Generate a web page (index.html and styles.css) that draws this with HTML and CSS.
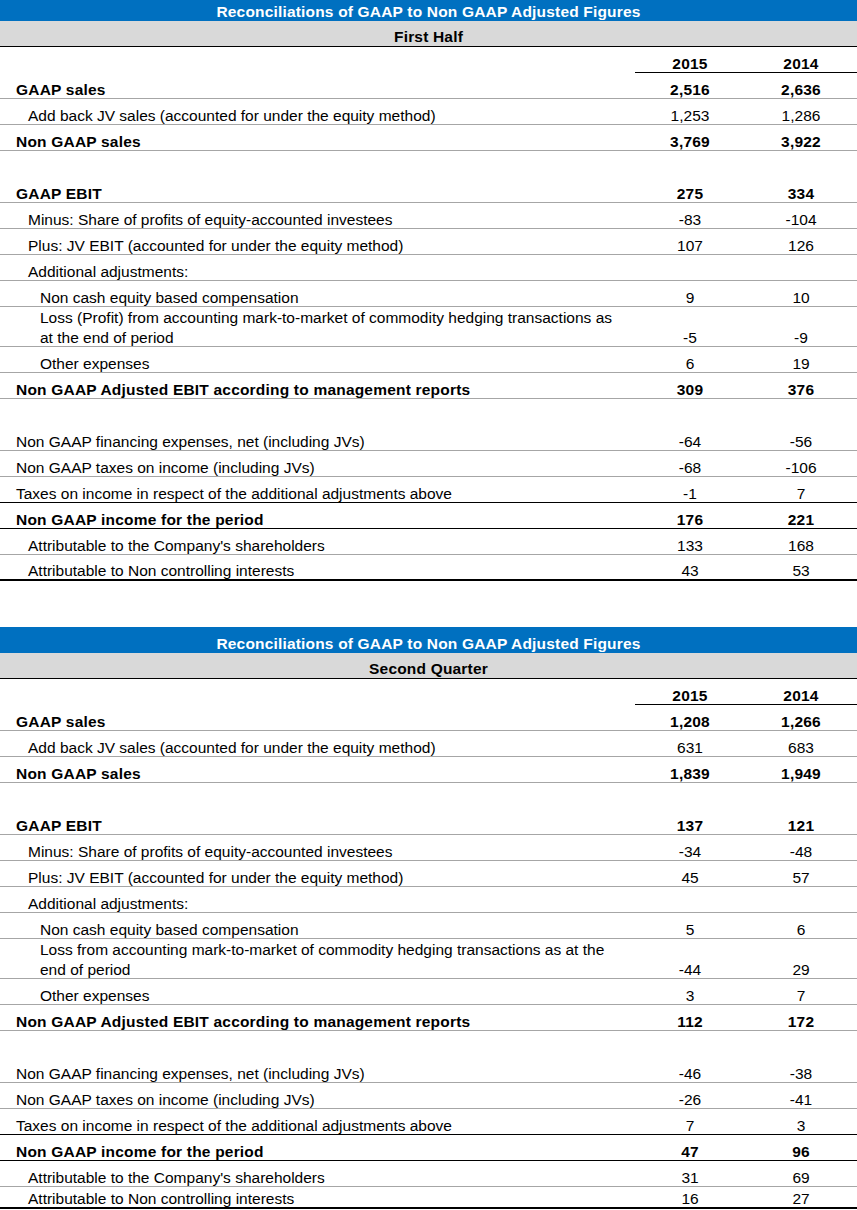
FILE: index.html
```html
<!DOCTYPE html>
<html lang="en">

<head>
    <meta charset="UTF-8">
    <meta name="viewport" content="width=device-width, initial-scale=1.0">
    <title>Reconciliations of GAAP to Non GAAP Adjusted Figures</title>
    <link rel="stylesheet" href="styles.css">
</head>

<body>
    <div class="report">
        <!-- first half -->
        <section class="recon">
            <div class="recon-title recon-title--cut">Reconciliations of GAAP to Non GAAP Adjusted Figures</div>
            <div class="recon-period">First Half</div>
            <div class="row row--plain row--bold">
                <span class="cell label"></span><span class="cell num year">2015</span><span class="cell num year">2014</span>
            </div>
            <div class="row row--bold">
                <span class="cell label">GAAP sales</span><span class="cell num">2,516</span><span class="cell num">2,636</span>
            </div>
            <div class="row">
                <span class="cell label indent-1">Add back JV sales (accounted for under the equity method)</span><span class="cell num">1,253</span><span class="cell num">1,286</span>
            </div>
            <div class="row row--bold">
                <span class="cell label">Non GAAP sales</span><span class="cell num">3,769</span><span class="cell num">3,922</span>
            </div>
            <div class="row row--plain"></div>
            <div class="row row--bold">
                <span class="cell label">GAAP EBIT</span><span class="cell num">275</span><span class="cell num">334</span>
            </div>
            <div class="row">
                <span class="cell label indent-1">Minus: Share of profits of equity-accounted investees</span><span class="cell num">-83</span><span class="cell num">-104</span>
            </div>
            <div class="row">
                <span class="cell label indent-1">Plus: JV EBIT (accounted for under the equity method)</span><span class="cell num">107</span><span class="cell num">126</span>
            </div>
            <div class="row">
                <span class="cell label indent-1">Additional adjustments:</span><span class="cell num"></span><span class="cell num"></span>
            </div>
            <div class="row">
                <span class="cell label indent-2">Non cash equity based compensation</span><span class="cell num">9</span><span class="cell num">10</span>
            </div>
            <div class="row row--tall">
                <span class="cell label indent-2">Loss (Profit) from accounting mark-to-market of commodity hedging transactions as<br>at the end of period</span><span class="cell num">-5</span><span class="cell num">-9</span>
            </div>
            <div class="row">
                <span class="cell label indent-2">Other expenses</span><span class="cell num">6</span><span class="cell num">19</span>
            </div>
            <div class="row row--bold">
                <span class="cell label">Non GAAP Adjusted EBIT according to management reports</span><span class="cell num">309</span><span class="cell num">376</span>
            </div>
            <div class="row row--plain"></div>
            <div class="row">
                <span class="cell label">Non GAAP financing expenses, net (including JVs)</span><span class="cell num">-64</span><span class="cell num">-56</span>
            </div>
            <div class="row">
                <span class="cell label">Non GAAP taxes on income (including JVs)</span><span class="cell num">-68</span><span class="cell num">-106</span>
            </div>
            <div class="row row--dark">
                <span class="cell label">Taxes on income in respect of the additional adjustments above</span><span class="cell num">-1</span><span class="cell num">7</span>
            </div>
            <div class="row row--dark row--bold">
                <span class="cell label">Non GAAP income for the period</span><span class="cell num">176</span><span class="cell num">221</span>
            </div>
            <div class="row">
                <span class="cell label indent-1">Attributable to the Company's shareholders</span><span class="cell num">133</span><span class="cell num">168</span>
            </div>
            <div class="row row--end">
                <span class="cell label indent-1">Attributable to Non controlling interests</span><span class="cell num">43</span><span class="cell num">53</span>
            </div>
        </section>

        <!-- second quarter -->
        <section class="recon">
            <div class="recon-title">Reconciliations of GAAP to Non GAAP Adjusted Figures</div>
            <div class="recon-period">Second Quarter</div>
            <div class="row row--plain row--bold">
                <span class="cell label"></span><span class="cell num year">2015</span><span class="cell num year">2014</span>
            </div>
            <div class="row row--bold">
                <span class="cell label">GAAP sales</span><span class="cell num">1,208</span><span class="cell num">1,266</span>
            </div>
            <div class="row">
                <span class="cell label indent-1">Add back JV sales (accounted for under the equity method)</span><span class="cell num">631</span><span class="cell num">683</span>
            </div>
            <div class="row row--bold">
                <span class="cell label">Non GAAP sales</span><span class="cell num">1,839</span><span class="cell num">1,949</span>
            </div>
            <div class="row row--plain"></div>
            <div class="row row--bold">
                <span class="cell label">GAAP EBIT</span><span class="cell num">137</span><span class="cell num">121</span>
            </div>
            <div class="row">
                <span class="cell label indent-1">Minus: Share of profits of equity-accounted investees</span><span class="cell num">-34</span><span class="cell num">-48</span>
            </div>
            <div class="row">
                <span class="cell label indent-1">Plus: JV EBIT (accounted for under the equity method)</span><span class="cell num">45</span><span class="cell num">57</span>
            </div>
            <div class="row">
                <span class="cell label indent-1">Additional adjustments:</span><span class="cell num"></span><span class="cell num"></span>
            </div>
            <div class="row">
                <span class="cell label indent-2">Non cash equity based compensation</span><span class="cell num">5</span><span class="cell num">6</span>
            </div>
            <div class="row row--tall">
                <span class="cell label indent-2">Loss from accounting mark-to-market of commodity hedging transactions as at the<br>end of period</span><span class="cell num">-44</span><span class="cell num">29</span>
            </div>
            <div class="row">
                <span class="cell label indent-2">Other expenses</span><span class="cell num">3</span><span class="cell num">7</span>
            </div>
            <div class="row row--bold">
                <span class="cell label">Non GAAP Adjusted EBIT according to management reports</span><span class="cell num">112</span><span class="cell num">172</span>
            </div>
            <div class="row row--plain"></div>
            <div class="row">
                <span class="cell label">Non GAAP financing expenses, net (including JVs)</span><span class="cell num">-46</span><span class="cell num">-38</span>
            </div>
            <div class="row">
                <span class="cell label">Non GAAP taxes on income (including JVs)</span><span class="cell num">-26</span><span class="cell num">-41</span>
            </div>
            <div class="row row--dark">
                <span class="cell label">Taxes on income in respect of the additional adjustments above</span><span class="cell num">7</span><span class="cell num">3</span>
            </div>
            <div class="row row--dark row--bold">
                <span class="cell label">Non GAAP income for the period</span><span class="cell num">47</span><span class="cell num">96</span>
            </div>
            <div class="row">
                <span class="cell label indent-1">Attributable to the Company's shareholders</span><span class="cell num">31</span><span class="cell num">69</span>
            </div>
            <div class="row row--end row--short">
                <span class="cell label indent-1">Attributable to Non controlling interests</span><span class="cell num">16</span><span class="cell num">27</span>
            </div>
        </section>
    </div>
</body>

</html>
```

FILE: styles.css
```css
body {
    margin: 0;
    background-color: #ffffff;
}

.report {
    width: 857px;
    font-family: "Liberation Sans", Arial, Helvetica, sans-serif;
    font-size: 15.5px;
    line-height: 20px;
    color: #000000;
}

.recon + .recon {
    margin-top: 46px;
}

.recon-title {
    height: 26px;
    padding-top: 7px;
    box-sizing: border-box;
    background-color: #0070c0;
    color: #ffffff;
    font-weight: bold;
    letter-spacing: 0.18px;
    text-align: center;
}

/* top of the first sheet is cut off */
.recon-title--cut {
    height: 21px;
    padding-top: 2px;
}

.recon-period {
    height: 26px;
    padding-top: 7px;
    box-sizing: border-box;
    background-color: #d9d9d9;
    border-bottom: 1px solid #000000;
    font-weight: bold;
    letter-spacing: 0.18px;
    text-align: center;
    line-height: 17px;
}

.row {
    display: grid;
    grid-template-columns: 635px 110px 112px;
    height: 26px;
    box-sizing: border-box;
    border-bottom: 1px solid #a6a6a6;
}

.row--plain {
    border-bottom: none;
}

.row--dark {
    border-bottom: 1px solid #000000;
}

.row--end {
    border-bottom: 2px solid #000000;
}

.row--tall {
    height: 40px;
}

.row--tall .cell {
    line-height: 20px;
    margin-bottom: -2px;
}

.row--short {
    height: 22px;
}

.row--bold {
    font-weight: bold;
    letter-spacing: 0.2px;
}

.cell {
    display: flex;
    align-items: flex-end;
    white-space: nowrap;
    line-height: 17px;
}

.label {
    padding-left: 16px;
}

.indent-1 {
    padding-left: 28px;
}

.indent-2 {
    padding-left: 40px;
}

.num {
    justify-content: center;
    text-align: center;
}

.year {
    border-bottom: 1px solid #000000;
}
```
